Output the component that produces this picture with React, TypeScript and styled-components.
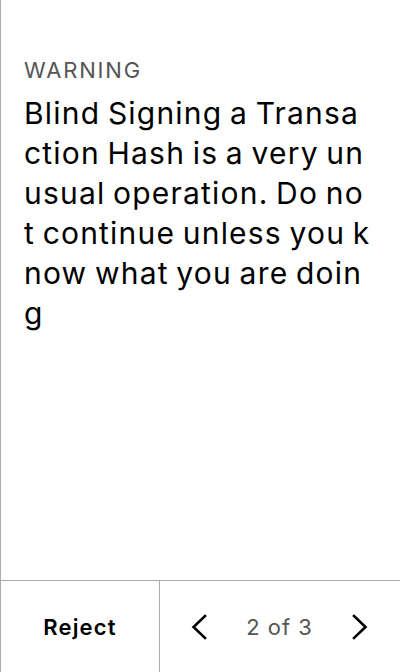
import React from "react";
import styled, { createGlobalStyle } from "styled-components";

const Global = createGlobalStyle`
  html, body { margin: 0; padding: 0; background: #fff; }
  body { font-family: Inter, "Noto Sans", sans-serif; }
  * { box-sizing: border-box; }
`;

const Screen = styled.div`
  width: 400px;
  height: 672px;
  display: flex;
  flex-direction: column;
  border-left: 1px solid #aaa;
  background: #fff;
`;

const Content = styled.div`
  flex: 1;
  padding: 56px 28px 0 23px;
  display: flex;
  flex-direction: column;
  gap: 9px;
`;

const Label = styled.div`
  font-size: 22px;
  line-height: 28px;
  color: #555;
  letter-spacing: 1.8px;
`;

const Body = styled.div`
  font-size: 30px;
  line-height: 40px;
  color: #000;
  letter-spacing: 1.2px;
  word-spacing: -2px;
  word-break: break-all;
`;

const Footer = styled.div`
  height: 92px;
  border-top: 1px solid #aaa;
  display: grid;
  grid-template-columns: 159px 1fr;
`;

const RejectButton = styled.div`
  display: flex;
  align-items: center;
  justify-content: center;
  font-size: 22px;
  font-weight: 600;
  letter-spacing: 1.2px;
  color: #000;
  border-right: 1px solid #aaa;
`;

const Pager = styled.div`
  display: flex;
  align-items: center;
  justify-content: space-between;
  padding: 0 28px 0 27px;
`;

const PageText = styled.div`
  font-size: 22px;
  letter-spacing: 1px;
  color: #555;
`;

const IconBox = styled.div`
  width: 24px;
  height: 26px;
  display: flex;
  align-items: center;
  justify-content: center;
`;

const Chevron = ({ dir }: { dir: "left" | "right" }) => (
  <IconBox>
    <svg width="16" height="26" viewBox="0 0 16 26" fill="none">
      <path
        d={dir === "left" ? "M14 2 L2.5 13 L14 24" : "M2 2 L13.5 13 L2 24"}
        stroke="#000"
        strokeWidth="2.6"
        strokeLinecap="square"
        strokeLinejoin="miter"
      />
    </svg>
  </IconBox>
);

export default function App() {
  return (
    <>
      <Global />
      <Screen>
        <Content>
          <Label>WARNING</Label>
          <Body>
            Blind Signing a Transaction Hash is a very unusual operation. Do not continue unless you know what you are doing
          </Body>
        </Content>
        <Footer>
          <RejectButton>Reject</RejectButton>
          <Pager>
            <Chevron dir="left" />
            <PageText>2 of 3</PageText>
            <Chevron dir="right" />
          </Pager>
        </Footer>
      </Screen>
    </>
  );
}
